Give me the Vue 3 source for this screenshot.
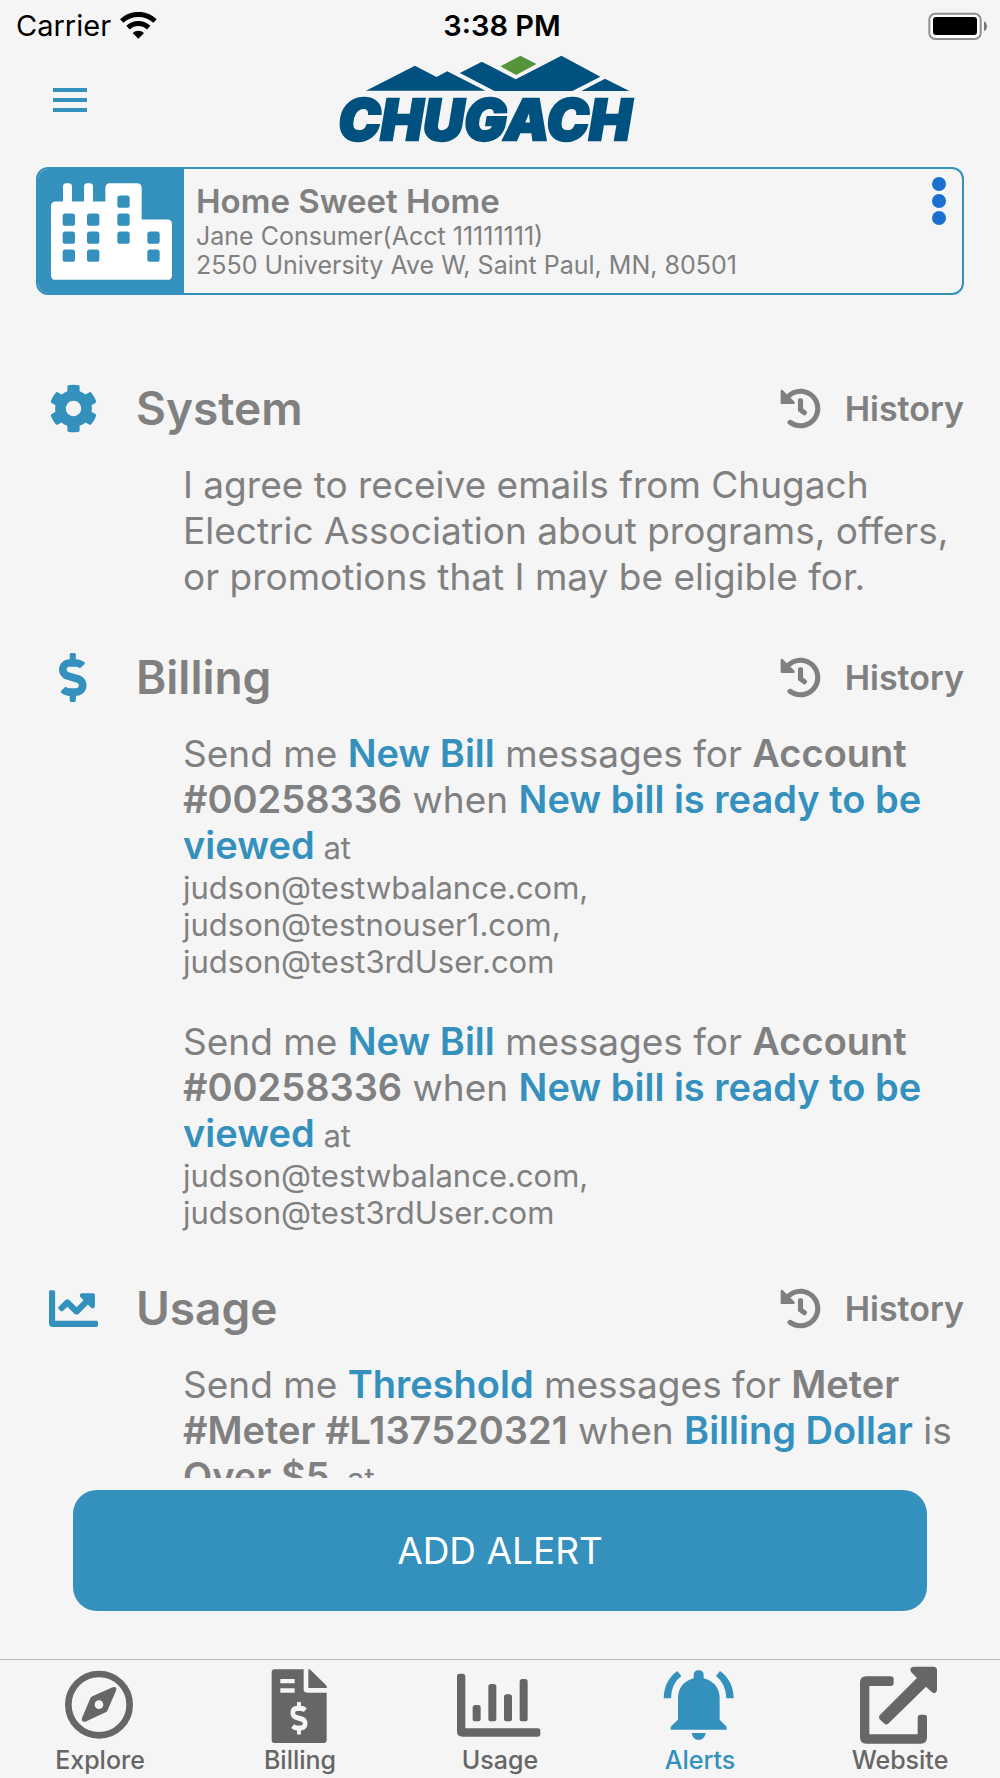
<template>
  <div class="screen">
    <!-- Status bar -->
    <div class="status-bar">
      <div class="carrier">
        <span>Carrier</span>
        <svg class="wifi" viewBox="360 30 111 81" aria-hidden="true">
          <path d="M365 57A73 73 0 0 1 465 57" fill="none" stroke="#000" stroke-width="15" />
          <path d="M384 77A45 45 0 0 1 446 77" fill="none" stroke="#000" stroke-width="15" />
          <path d="M415 110L398 93A25 25 0 0 1 432 93Z" />
        </svg>
      </div>
      <span class="clock">3:38 PM</span>
      <svg class="battery" viewBox="804 30 180 84" aria-hidden="true">
        <rect x="808" y="35" width="154" height="76" rx="18" fill="#fff" stroke="#8f8f8f" stroke-width="6" />
        <rect x="819" y="45" width="132" height="54" rx="9" />
        <path d="M972 58q9 5 9 15t-9 15z" fill="#777" />
      </svg>
    </div>

    <!-- Header -->
    <header class="header">
      <button class="menu-btn" type="button" aria-label="Menu">
        <span></span>
        <span></span>
        <span></span>
      </button>
      <svg class="logo" viewBox="60 168 880 264" role="img" aria-label="Chugach">
        <path fill="#00517f" d="M138 272L285 197L350 231L382 214L497 272Z" />
        <path fill="#00517f" d="M420 219L486 185L588 238L725 167L842 230L758 273H524Z" />
        <path fill="#00517f" d="M785 273L856 236L929 273Z" />
        <path fill="#55943a" d="M542 199L602 167L650 192L589 225Z" />
        <text class="logo-text" x="495" y="419" text-anchor="middle">CHUGACH</text>
      </svg>
    </header>

    <!-- Account card -->
    <section class="account-card">
      <div class="account-icon">
        <svg viewBox="153 548 363 290" aria-hidden="true">
          <path
            fill="#fff"
            fill-rule="evenodd"
            d="M189 603V558q0-10 10-10h7q10 0 10 10V603H252V558q0-10 10-10h7q10 0 10 10V603H316V562q0-14 14-14h81q14 0 14 14V657H502q14 0 14 14V824q0 14-14 14H167q-14 0-14-14V617q0-14 14-14z"
          />
          <rect
            v-for="(pane, i) in windows"
            :key="i"
            :x="pane[0]"
            :y="pane[1]"
            width="37"
            height="37"
            rx="8"
            fill="#3490bd"
          />
        </svg>
      </div>
      <div class="account-text">
        <h1>Home Sweet Home</h1>
        <p>Jane Consumer(Acct 11111111)</p>
        <p>2550 University Ave W, Saint Paul, MN, 80501</p>
      </div>
      <button class="more-btn" type="button" aria-label="Account options">
        <span></span>
        <span></span>
        <span></span>
      </button>
    </section>

    <!-- Alerts -->
    <main class="alerts">
      <section v-for="section in sections" :key="section.title" class="alert-section">
        <div class="section-head">
          <div class="section-icon">
            <svg :viewBox="section.viewBox" aria-hidden="true">
              <path :d="section.icon" />
            </svg>
          </div>
          <h2>{{ section.title }}</h2>
          <button class="history-btn" type="button">
            <svg viewBox="0 0 512 512" aria-hidden="true">
              <path :d="historyIcon" />
            </svg>
            <span>History</span>
          </button>
        </div>
        <div class="section-body">
          <div v-for="(alert, i) in section.alerts" :key="i" class="alert-item">
            <p class="alert-text">
              <template v-for="(part, j) in alert.parts" :key="j">
                <span v-if="part.type" :class="part.type">{{ part.text }}</span>
                <template v-else>{{ part.text }}</template>
              </template>
            </p>
            <p v-for="email in alert.emails" :key="email" class="email">{{ email }}</p>
          </div>
        </div>
      </section>
    </main>

    <div class="action">
      <button class="add-btn" type="button">ADD ALERT</button>
    </div>

    <!-- Tab bar -->
    <nav class="tab-bar">
      <a href="#explore" class="tab">
        <svg viewBox="165 78 270 234" aria-hidden="true">
          <circle cx="297" cy="194" r="92" fill="none" stroke="currentColor" stroke-width="20" />
          <path
            fill-rule="evenodd"
            d="M338 142L277 169Q273 171 271 175L246 234Q243 247 256 245L317 217Q320 216 322 212L348 152Q352 138 338 142ZM297 181a13 13 0 1 1 0 26a13 13 0 1 1 0-26z"
          />
        </svg>
        <span>Explore</span>
      </a>
      <a href="#billing" class="tab">
        <svg viewBox="765 78 270 234" aria-hidden="true">
          <path
            fill-rule="evenodd"
            d="M824 88H911V148q0 10 10 10H980V300q0 9-9 9H824q-9 0-9-9V97q0-9 9-9zM841 117V130H884V117zM841 145V158H884V145z"
          />
          <path d="M925 88q5 0 9 4L977 134q4 4 4 10H925z" />
          <svg x="871" y="185" width="52" height="99" viewBox="0 0 288 512" preserveAspectRatio="none">
            <path class="cut" :d="dollarIcon" />
          </svg>
        </svg>
        <span>Billing</span>
      </a>
      <a href="#usage" class="tab">
        <svg viewBox="315 78 270 234" aria-hidden="true">
          <path d="M329 101h9q8 0 8 8V265H563q8 0 8 8v9q0 8-8 8H337q-16 0-16-16V109q0-8 8-8z" />
          <rect x="368" y="195" width="24" height="49" rx="8" />
          <rect x="415" y="132" width="24" height="112" rx="8" />
          <rect x="462" y="163" width="24" height="81" rx="8" />
          <rect x="509" y="117" width="24" height="127" rx="8" />
        </svg>
        <span>Usage</span>
      </a>
      <a href="#alerts" class="tab active" aria-current="page">
        <svg viewBox="45 78 270 234" aria-hidden="true">
          <path
            d="M176 91q15 0 15 15v9Q239 128 239 176V239L258 258q2 2 2 5V269H92V263q0-3 2-5L114 239V176Q114 128 161 115V106q0-15 15-15z"
          />
          <path d="M155 279H197Q193 300 176 300Q159 300 155 279Z" />
          <path d="M71 175Q72 122 112 93L124 108Q93 131 93 175Z" />
          <path d="M281 175Q280 122 240 93L228 108Q258 131 259 175Z" />
        </svg>
        <span>Alerts</span>
      </a>
      <a href="#website" class="tab">
        <svg viewBox="645 78 270 234" aria-hidden="true">
          <path
            d="M679 109H752q9 0 9 9V129q0 9-9 9H688V283H833V233q0-9 9-9H852q9 0 9 9V292q0 19-19 19H679q-19 0-19-19V128q0-19 19-19z"
          />
          <path
            d="M820 80H880q11 0 11 11V150q-3 14-15 7L858 140L746 250q-7 7-14 0L719 238q-5-6 0-12L831 114L814 97q-8-13 6-17z"
          />
        </svg>
        <span>Website</span>
      </a>
    </nav>
  </div>
</template>

<script setup>
const windows = [
  [352, 585], [352, 639], [352, 693],
  [188, 639], [188, 693], [188, 747],
  [261, 639], [261, 693], [261, 747],
  [442, 693], [442, 747]
]

const historyIcon =
  'M504 255.531c.253 136.64-111.18 248.372-247.82 248.468-59.015.042-113.223-20.53-155.822-54.911-11.077-8.94-11.905-25.541-1.839-35.607l11.267-11.267c8.609-8.609 22.353-9.551 31.891-1.984C173.062 425.135 212.781 440 256 440c101.705 0 184-82.311 184-184 0-101.705-82.311-184-184-184-48.814 0-93.149 18.969-126.068 49.932l50.754 50.754c10.08 10.08 2.941 27.314-11.313 27.314H24c-8.837 0-16-7.163-16-16V38.627c0-14.254 17.234-21.393 27.314-11.314l49.372 49.372C129.209 34.136 189.552 8 256 8c136.81 0 247.747 110.78 248 247.531zm-180.912 78.784l9.823-12.63c8.138-10.463 6.253-25.542-4.21-33.679L288 256.349V152c0-13.255-10.745-24-24-24h-16c-13.255 0-24 10.745-24 24v135.651l65.409 50.874c10.463 8.137 25.541 6.253 33.679-4.21z'

const cogIcon =
  'M487.4 315.7l-42.6-24.6c4.3-23.2 4.3-47 0-70.2l42.6-24.6c4.9-2.8 7.1-8.6 5.5-14-11.1-35.6-30-67.8-54.7-94.6-3.8-4.1-10-5.1-14.8-2.3L380.8 110c-17.9-15.4-38.5-27.3-60.8-35.1V25.8c0-5.6-3.9-10.5-9.4-11.7-36.7-8.2-74.3-7.8-109.2 0-5.5 1.2-9.4 6.1-9.4 11.7V75c-22.2 7.9-42.8 19.8-60.8 35.1L88.7 85.5c-4.9-2.8-11-1.9-14.8 2.3-24.7 26.7-43.6 58.9-54.7 94.6-1.7 5.4.6 11.2 5.5 14L67.3 221c-4.3 23.2-4.3 47 0 70.2l-42.6 24.6c-4.9 2.8-7.1 8.6-5.5 14 11.1 35.6 30 67.8 54.7 94.6 3.8 4.1 10 5.1 14.8 2.3l42.6-24.6c17.9 15.4 38.5 27.3 60.8 35.1v49.2c0 5.6 3.9 10.5 9.4 11.7 36.7 8.2 74.3 7.8 109.2 0 5.5-1.2 9.4-6.1 9.4-11.7v-49.2c22.2-7.9 42.8-19.8 60.8-35.1l42.6 24.6c4.9 2.8 11 1.9 14.8-2.3 24.7-26.7 43.6-58.9 54.7-94.6 1.5-5.5-.7-11.3-5.6-14.1zM256 336c-44.1 0-80-35.9-80-80s35.9-80 80-80 80 35.9 80 80-35.9 80-80 80z'

const dollarIcon =
  'M209.2 233.4l-108-31.6C88.7 198.2 80 186.5 80 173.5c0-16.3 13.2-29.5 29.5-29.5h66.3c12.2 0 24.2 3.7 34.2 10.5 6.1 4.1 14.3 3.1 19.5-2l34.8-34c7.1-6.9 6.1-18.4-1.8-24.5C238 74.8 207.4 64.1 176 64V16c0-8.8-7.2-16-16-16h-32c-8.8 0-16 7.2-16 16v48h-2.5C45.8 64-5.4 118.7.5 183.6c4.2 46.1 39.4 83.6 83.8 96.6l102.5 30c12.5 3.7 21.2 15.3 21.2 28.3 0 16.3-13.2 29.5-29.5 29.5h-66.3C100 368 88 364.3 78 357.5c-6.1-4.1-14.3-3.1-19.5 2l-34.8 34c-7.1 6.9-6.1 18.4 1.8 24.5 24.5 19.2 55.1 29.9 86.5 30v48c0 8.8 7.2 16 16 16h32c8.8 0 16-7.2 16-16v-48.2c46.6-.9 90.3-28.6 105.7-72.7 21.5-61.6-14.6-124.8-72.5-141.7z'

const chartIcon =
  'M496 384H64V80c0-8.84-7.16-16-16-16H16C7.16 64 0 71.16 0 80v336c0 17.67 14.33 32 32 32h464c8.84 0 16-7.16 16-16v-32c0-8.84-7.16-16-16-16zM464 96H345.94c-21.38 0-32.09 25.85-16.97 40.97l32.4 32.4L288 242.75l-73.37-73.37c-12.5-12.5-32.76-12.5-45.25 0l-68.69 68.69c-6.25 6.25-6.25 16.38 0 22.63l22.62 22.62c6.25 6.25 16.38 6.25 22.63 0L192 237.25l73.37 73.37c12.5 12.5 32.76 12.5 45.25 0l96-96 32.4 32.4c15.12 15.12 40.97 4.41 40.97-16.97V112c.01-8.84-7.15-16-16-16z'

const newBillParts = [
  { text: 'Send me ' },
  { text: 'New Bill', type: 'link' },
  { text: ' messages for ' },
  { text: 'Account #00258336', type: 'strong' },
  { text: ' when ' },
  { text: 'New bill is ready to be viewed', type: 'link' },
  { text: ' at', type: 'small' }
]

const sections = [
  {
    title: 'System',
    icon: cogIcon,
    viewBox: '0 0 512 512',
    alerts: [
      {
        parts: [
          {
            text: 'I agree to receive emails from Chugach Electric Association about programs, offers, or promotions that I may be eligible for.'
          }
        ],
        emails: []
      }
    ]
  },
  {
    title: 'Billing',
    icon: dollarIcon,
    viewBox: '0 0 288 512',
    alerts: [
      {
        parts: newBillParts,
        emails: ['judson@testwbalance.com,', 'judson@testnouser1.com,', 'judson@test3rdUser.com']
      },
      {
        parts: newBillParts,
        emails: ['judson@testwbalance.com,', 'judson@test3rdUser.com']
      }
    ]
  },
  {
    title: 'Usage',
    icon: chartIcon,
    viewBox: '0 0 512 512',
    alerts: [
      {
        parts: [
          { text: 'Send me ' },
          { text: 'Threshold', type: 'link' },
          { text: ' messages for ' },
          { text: 'Meter #Meter #L137520321', type: 'strong' },
          { text: ' when ' },
          { text: 'Billing Dollar', type: 'link' },
          { text: ' is ' },
          { text: 'Over $5', type: 'strong' },
          { text: '\u00a0 at', type: 'small' }
        ],
        emails: []
      }
    ]
  }
]
</script>

<style>
body {
  margin: 0;
  background: #f5f5f5;
}
</style>

<style scoped>
.screen {
  display: flex;
  flex-direction: column;
  height: 100vh;
  background: #f5f5f5;
  color: #808080;
  font-family: Inter, "Liberation Sans", sans-serif;
}

h1,
h2,
p {
  margin: 0;
}

button {
  padding: 0;
  border: none;
  background: none;
  color: inherit;
  font-family: inherit;
  cursor: pointer;
}

svg {
  display: block;
  fill: currentColor;
}

.status-bar {
  display: grid;
  grid-template-columns: 1fr auto 1fr;
  align-items: center;
  height: 51px;
  padding: 0 12px 0 16px;
  color: #000;
  font-size: 29px;
  flex-shrink: 0;
}

.carrier {
  display: flex;
  align-items: center;
  gap: 9px;
}

.wifi {
  width: 37px;
  height: 27px;
}

.clock {
  font-weight: 600;
}

.battery {
  width: 60px;
  height: 28px;
  justify-self: end;
}

.header {
  display: grid;
  grid-template-columns: 1fr auto 1fr;
  align-items: center;
  height: 98px;
  padding-right: 27px;
  flex-shrink: 0;
}

.menu-btn {
  display: flex;
  flex-direction: column;
  gap: 6px;
  width: 34px;
  margin-left: 53px;
}

.menu-btn span {
  height: 4px;
  background: #3490bd;
}

.logo {
  width: 293px;
  height: 88px;
  overflow: visible;
}

.logo-text {
  fill: #00517f;
  stroke: #00517f;
  stroke-width: 7px;
  font-family: Inter, sans-serif;
  font-size: 170px;
  font-style: italic;
  font-weight: 900;
}

.account-card {
  display: flex;
  align-items: stretch;
  height: 124px;
  margin: 18px 36px 0;
  border: 2px solid #3490bd;
  border-radius: 12px;
  overflow: hidden;
  flex-shrink: 0;
}

.account-icon {
  display: flex;
  align-items: center;
  justify-content: center;
  width: 146px;
  background: #3490bd;
}

.account-icon svg {
  width: 121px;
  height: 97px;
}

.account-text {
  flex: 1;
  padding: 12px 0 0 12px;
}

.account-text h1 {
  font-size: 33px;
  font-weight: 600;
  line-height: 41px;
}

.account-text p {
  font-size: 25px;
  line-height: 29px;
}

.more-btn {
  display: flex;
  flex-direction: column;
  align-self: flex-start;
  gap: 3px;
  margin: 8px 16px 0 0;
}

.more-btn span {
  width: 14px;
  height: 14px;
  border-radius: 50%;
  background: #1a6fd0;
}

.alerts {
  flex: 1;
  min-height: 0;
  margin-top: 36px;
  padding: 0 36px;
  overflow-y: auto;
  scrollbar-width: none;
}

.alert-section {
  padding-top: 49px;
}

.section-head {
  display: flex;
  align-items: center;
  height: 56px;
}

.section-icon {
  display: flex;
  justify-content: center;
  width: 74px;
  margin-right: 26px;
  color: #3490bd;
}

.section-icon svg {
  height: 49px;
}

.section-head h2 {
  flex: 1;
  font-size: 46px;
  font-weight: 600;
  line-height: 56px;
}

.history-btn {
  display: flex;
  align-items: center;
  gap: 24px;
  font-size: 34px;
  font-weight: 600;
}

.history-btn svg {
  width: 41px;
  height: 41px;
}

.section-body {
  display: flex;
  flex-direction: column;
  gap: 39px;
  padding: 26px 0 0 147px;
}

.alert-text {
  font-size: 37px;
  line-height: 46px;
}

.link,
.strong {
  font-size: 38px;
  font-weight: 600;
  line-height: 1;
}

.link {
  color: #3490bd;
}

.small {
  font-size: 31px;
  line-height: 1;
}

.email {
  font-size: 31px;
  line-height: 37px;
}

.action {
  padding: 12px 73px 48px;
  flex-shrink: 0;
}

.add-btn {
  width: 100%;
  height: 121px;
  border-radius: 24px;
  background: #3490bd;
  color: #fff;
  font-size: 37px;
}

.tab-bar {
  display: grid;
  grid-template-columns: repeat(5, 1fr);
  height: 118px;
  border-top: 1px solid #b8b8b8;
  flex-shrink: 0;
}

.tab {
  display: flex;
  flex-direction: column;
  align-items: center;
  padding-top: 6px;
  color: #666;
  font-size: 25px;
  font-weight: 500;
  line-height: 32px;
  text-decoration: none;
}

.tab > svg {
  width: 90px;
  height: 78px;
}

.tab.active {
  color: #3490bd;
}

.cut {
  fill: #f5f5f5;
}
</style>
